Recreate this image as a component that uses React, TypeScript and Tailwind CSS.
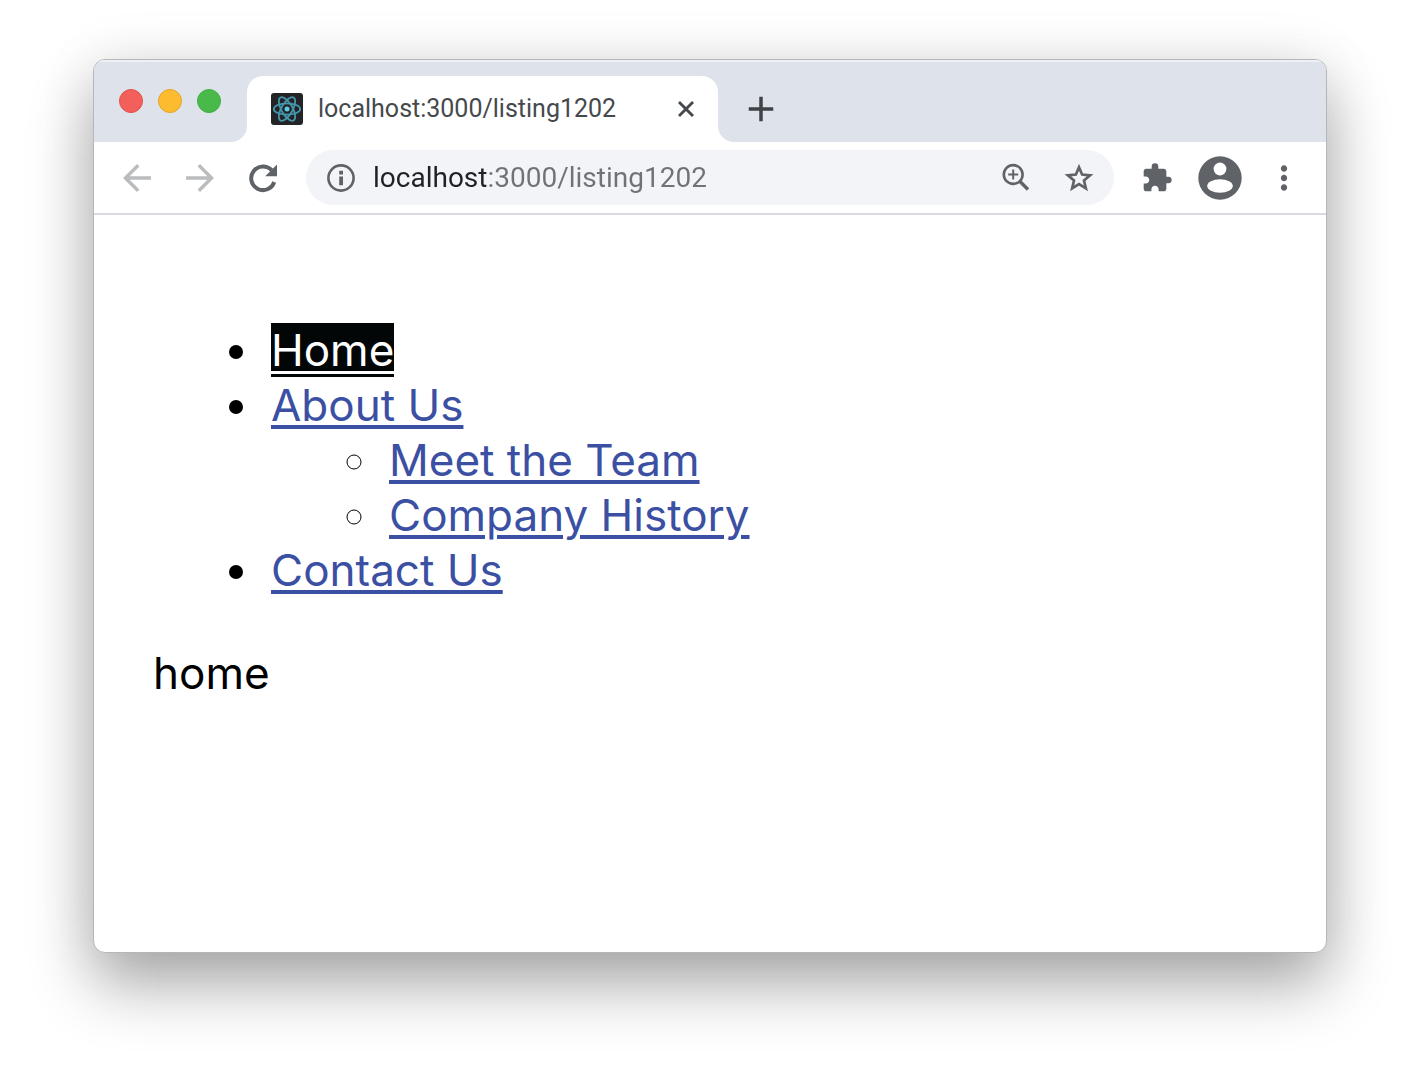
import { useState } from 'react';
import { X } from 'lucide-react';
import { MdAdd, MdArrowBack, MdArrowForward, MdExtension, MdMoreVert } from 'react-icons/md';

// Site map shown in the page
const links = [
  { id: 'home', label: 'Home' },
  {
    id: 'about',
    label: 'About Us',
    children: [
      { id: 'team', label: 'Meet the Team' },
      { id: 'history', label: 'Company History' },
    ],
  },
  { id: 'contact', label: 'Contact Us' },
];

function ReactFavicon() {
  return (
    <svg viewBox="0 0 32 32" className="size-8 shrink-0" aria-hidden="true">
      <rect width="32" height="32" rx="3" fill="#222425" />
      <g fill="none" stroke="#4596ad" strokeWidth="1.8">
        <ellipse cx="16" cy="16" rx="13.2" ry="5.6" />
        <ellipse cx="16" cy="16" rx="13.2" ry="5.6" transform="rotate(60 16 16)" />
        <ellipse cx="16" cy="16" rx="13.2" ry="5.6" transform="rotate(120 16 16)" />
      </g>
      <circle cx="16" cy="16" r="2.5" fill="#5ccbe8" />
    </svg>
  );
}

function ReloadIcon() {
  return (
    <svg viewBox="0 0 42 42" className="size-[42px]" aria-hidden="true">
      <path d="M32.2 25a11.8 11.8 0 1 1-2.4-11.6" fill="none" stroke="currentColor" strokeWidth="4" />
      <path d="M35 7.5v11.7H23.2z" fill="currentColor" />
    </svg>
  );
}

function InfoIcon() {
  return (
    <svg viewBox="0 0 34 34" className="size-[34px]" aria-hidden="true">
      <circle cx="17" cy="17" r="12.6" fill="none" stroke="currentColor" strokeWidth="2.6" />
      <path d="M15.2 15.5h3.8v8.7h-3.8zM15.2 9.8h3.8v3.6h-3.8z" fill="currentColor" />
    </svg>
  );
}

function ZoomIcon() {
  return (
    <svg viewBox="0 0 36 36" className="size-9" fill="none" stroke="currentColor" aria-hidden="true">
      <circle cx="15.2" cy="14.5" r="9.4" strokeWidth="2.6" />
      <path d="M22 21.5l8 8" strokeWidth="3.4" />
      <path d="M15.2 9.5v10M10.2 14.5h10" strokeWidth="2" />
    </svg>
  );
}

function StarIcon() {
  return (
    <svg viewBox="0 0 34 34" className="size-[34px]" aria-hidden="true">
      <path
        d="M17 6.2l3.1 7.4 8 .7-6.1 5.2 1.9 7.9-6.9-4.2-6.9 4.2 1.9-7.9-6.1-5.2 8-.7z"
        fill="none"
        stroke="currentColor"
        strokeWidth="2.7"
      />
    </svg>
  );
}

function ProfileIcon() {
  return (
    <svg viewBox="0 0 52 52" className="size-[52px]" aria-hidden="true">
      <circle cx="26" cy="26" r="21.7" fill="currentColor" />
      <circle cx="26" cy="17" r="6.4" fill="#fff" />
      <ellipse cx="26" cy="34" rx="12.8" ry="6.8" fill="#fff" />
    </svg>
  );
}

function TabBar() {
  return (
    <div className="flex h-[82px] items-end border-t-2 border-[#eef0f4] bg-[#dee2ea]">
      <div className="mb-[29px] flex gap-[15px] pl-[25px]">
        <button aria-label="Close window" className="size-6 rounded-full border border-[#e2504a] bg-[#f35f5b]" />
        <button aria-label="Minimize window" className="size-6 rounded-full border border-[#e5a428] bg-[#fdbc2f]" />
        <button aria-label="Zoom window" className="size-6 rounded-full border border-[#3fae45] bg-[#49b949]" />
      </div>

      {/* Flared corners on either side of the active tab */}
      <span className="ml-[10px] size-4 bg-white">
        <span className="block size-full rounded-br-2xl bg-[#dee2ea]" />
      </span>
      <div className="flex h-[66px] w-[471px] items-center rounded-t-2xl bg-white px-6">
        <ReactFavicon />
        <span className="ml-[15px] flex-1 text-[25px] leading-8 text-[#46494c]">localhost:3000/listing1202</span>
        <button aria-label="Close tab" className="-mr-1.5 text-[#46494c]">
          <X className="size-7" strokeWidth={2.5} strokeLinecap="butt" />
        </button>
      </div>
      <span className="size-4 bg-white">
        <span className="block size-full rounded-bl-2xl bg-[#dee2ea]" />
      </span>

      <button aria-label="New tab" className="mb-3 ml-1.5 text-[#3f4346]">
        <MdAdd className="size-[42px]" />
      </button>
    </div>
  );
}

function Toolbar() {
  return (
    <div className="flex items-center border-b-2 border-[#d7dbe0] py-2 pr-[23px] pl-[22px] text-[#5f6368]">
      <button aria-label="Back" className="text-[#babcbe]">
        <MdArrowBack className="size-[42px]" />
      </button>
      <button aria-label="Forward" className="ml-[21px] text-[#babcbe]">
        <MdArrowForward className="size-[42px]" />
      </button>
      <button aria-label="Reload" className="ml-[21px]">
        <ReloadIcon />
      </button>

      <div className="ml-[22px] flex h-[55px] flex-1 items-center rounded-full bg-[#f3f4f7] px-[18px]">
        <button aria-label="Site information">
          <InfoIcon />
        </button>
        <input
          aria-label="Address"
          defaultValue="localhost:3000/listing1202"
          className="ml-[15px] min-w-0 flex-1 bg-[linear-gradient(90deg,#202124_116px,#707376_116px)] bg-clip-text text-[28px] leading-9 text-transparent caret-black outline-none"
        />
        <button aria-label="Zoom in">
          <ZoomIcon />
        </button>
        <button aria-label="Bookmark this page" className="ml-7">
          <StarIcon />
        </button>
      </div>

      <button aria-label="Extensions" className="ml-[27px]">
        <MdExtension className="size-8" />
      </button>
      <button aria-label="Profile" className="ml-[21px]">
        <ProfileIcon />
      </button>
      <button aria-label="More" className="ml-[19px]">
        <MdMoreVert className="size-[38px]" />
      </button>
    </div>
  );
}

export default function App() {
  const [current, setCurrent] = useState('home');

  const renderLink = (id: string, label: string) => (
    <a
      href={`#${id}`}
      onClick={() => setCurrent(id)}
      className={`underline ${
        current === id
          ? 'bg-[#020607] text-white decoration-3 underline-offset-5'
          : 'text-[#3b50a3] decoration-4 underline-offset-4'
      }`}
    >
      {label}
    </a>
  );

  return (
    <div className="flex min-h-screen flex-col bg-white px-[93px] pt-[59px] pb-[131px]">
      <div className="flex flex-1 flex-col overflow-hidden rounded-xl border border-[#b4b6b8] bg-white font-[Roboto,sans-serif] shadow-[0_32px_64px_rgba(0,0,0,0.33),0_0_60px_rgba(0,0,0,0.08)]">
        <TabBar />
        <Toolbar />

        <main className="px-[59px] pt-[108px] font-[Inter,sans-serif] text-[44px] leading-[55px] text-black">
          {/* The item padding widens the gap between bullet and link */}
          <ul className="list-disc pl-[111px]">
            {links.map((link) => (
              <li key={link.id} className="pl-[7px]">
                {renderLink(link.id, link.label)}
                {link.children && (
                  <ul className="list-[circle] pl-[111px]">
                    {link.children.map((child) => (
                      <li key={child.id} className="pl-[7px]">
                        {renderLink(child.id, child.label)}
                      </li>
                    ))}
                  </ul>
                )}
              </li>
            ))}
          </ul>
          <p className="mt-12">{current}</p>
        </main>
      </div>
    </div>
  );
}
